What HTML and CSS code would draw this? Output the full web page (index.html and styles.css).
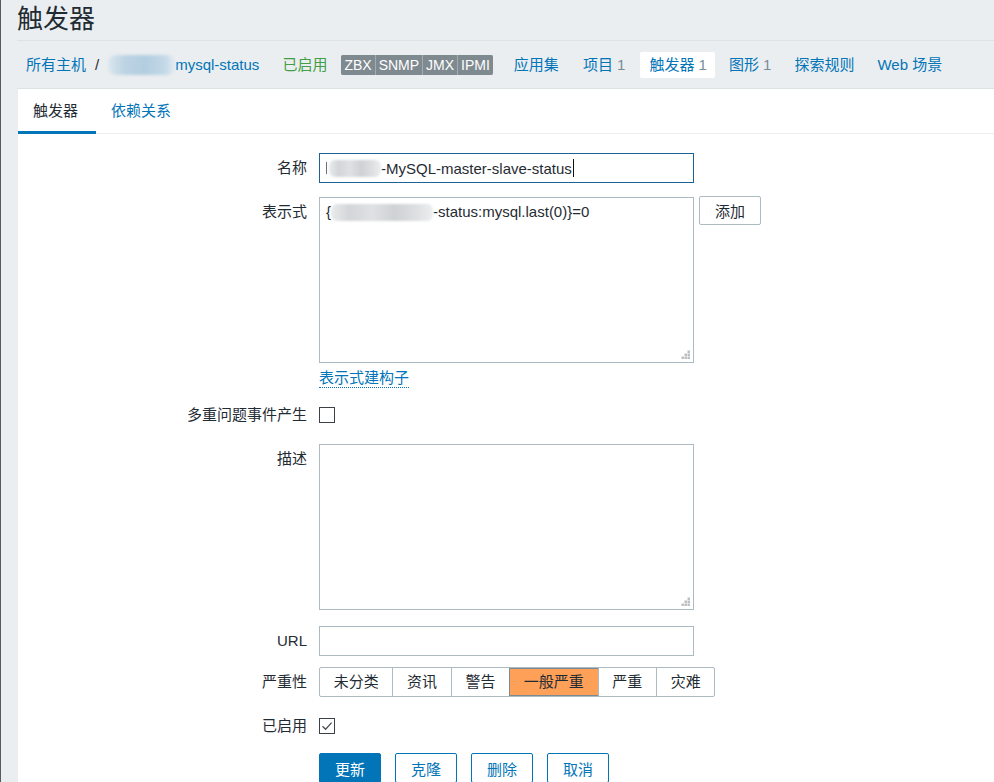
FILE: index.html
```html
<!DOCTYPE html>
<html lang="zh-CN">
<head>
<meta charset="utf-8">
<title>触发器</title>
<link rel="stylesheet" href="styles.css">
</head>
<body>
<div class="page">
  <header class="header">
    <h1 class="title">触发器</h1>
  </header>
  <nav class="nav">
    <a class="crumb">所有主机</a>
    <span class="sep">/</span>
    <a class="crumb host"><span class="blur blur-blue"></span>mysql-status</a>
    <span class="status-on">已启用</span>
    <span class="tags"><span class="tag">ZBX</span><span class="tag">SNMP</span><span class="tag">JMX</span><span class="tag">IPMI</span></span>
    <a class="nav-link first">应用集</a>
    <a class="nav-link">项目 <span class="count">1</span></a>
    <a class="nav-link active">触发器 <span class="count">1</span></a>
    <a class="nav-link">图形 <span class="count">1</span></a>
    <a class="nav-link">探索规则</a>
    <a class="nav-link">Web 场景</a>
  </nav>
  <main class="panel">
    <div class="tabs">
      <span class="tab active">触发器</span>
      <span class="tab">依赖关系</span>
    </div>
    <form class="form">
      <div class="row row-name">
        <label class="label">名称</label>
        <div class="field">
          <div class="input focused"><span class="frag"></span><span class="blur blur-grey short"></span>-MySQL-master-slave-status<span class="caret"></span></div>
        </div>
      </div>
      <div class="row row-expr">
        <label class="label">表示式</label>
        <div class="field">
          <div class="field-line">
            <div class="textarea"><span class="ta-text">{<span class="blur blur-grey long"></span>-status:mysql.last(0)}=0</span>
              <svg class="grip" width="10" height="10" viewBox="0 0 10 10"><rect x="7.5" y="1.5" width="2.5" height="2.5"/><rect x="4.5" y="4.5" width="2.5" height="2.5"/><rect x="7.5" y="4.5" width="2.5" height="2.5"/><rect x="1.5" y="7.5" width="2.5" height="2.5"/><rect x="4.5" y="7.5" width="2.5" height="2.5"/><rect x="7.5" y="7.5" width="2.5" height="2.5"/></svg>
            </div>
            <button type="button" class="btn-alt">添加</button>
          </div>
          <a class="link-dotted">表示式建构子</a>
        </div>
      </div>
      <div class="row row-multi">
        <label class="label">多重问题事件产生</label>
        <div class="field center"><span class="checkbox"></span></div>
      </div>
      <div class="row row-desc">
        <label class="label">描述</label>
        <div class="field">
          <div class="textarea">
            <svg class="grip" width="10" height="10" viewBox="0 0 10 10"><rect x="7.5" y="1.5" width="2.5" height="2.5"/><rect x="4.5" y="4.5" width="2.5" height="2.5"/><rect x="7.5" y="4.5" width="2.5" height="2.5"/><rect x="1.5" y="7.5" width="2.5" height="2.5"/><rect x="4.5" y="7.5" width="2.5" height="2.5"/><rect x="7.5" y="7.5" width="2.5" height="2.5"/></svg>
          </div>
        </div>
      </div>
      <div class="row row-url">
        <label class="label">URL</label>
        <div class="field"><div class="input"></div></div>
      </div>
      <div class="row row-sev">
        <label class="label">严重性</label>
        <div class="field">
          <div class="severity">
            <span class="seg">未分类</span><span class="seg">资讯</span><span class="seg">警告</span><span class="seg selected">一般严重</span><span class="seg">严重</span><span class="seg">灾难</span>
          </div>
        </div>
      </div>
      <div class="row row-enabled">
        <label class="label">已启用</label>
        <div class="field center"><span class="checkbox checked"><svg width="14" height="14" viewBox="0 0 14 14"><path d="M2.5 7.2 L5.6 10.2 L11.6 3.6" fill="none" stroke="#4a5258" stroke-width="1.3"/></svg></span></div>
      </div>
      <div class="row row-buttons">
        <span class="label"></span>
        <div class="field buttons">
          <button type="button" class="btn-main">更新</button>
          <button type="button" class="btn-outline">克隆</button>
          <button type="button" class="btn-outline">删除</button>
          <button type="button" class="btn-outline">取消</button>
        </div>
      </div>
    </form>
  </main>
</div>
</body>
</html>
```

FILE: styles.css
```css
* { box-sizing: border-box; }
html, body { margin: 0; padding: 0; height: 100%; }
body {
  background: #ebeef0;
  color: #1f2c33;
  font-family: "Liberation Sans", "Noto Sans CJK SC", sans-serif;
  font-size: 15px;
  overflow: hidden;
}
.page {
  min-height: 100%;
  border-left: 1px solid #555a5e;
  padding-left: 16px;
}
.header {
  height: 41px;
  border-bottom: 1px solid #dde2e5;
}
.title {
  margin: 0;
  font-weight: normal;
  font-size: 26px;
  line-height: 38px;
  color: #1f2c33;
}
.nav {
  display: flex;
  align-items: center;
  height: 48px;
  padding-top: 11px;
  padding-bottom: 10px;
  border-bottom: 1px solid #dde2e5;
}
.nav a { color: #0275b8; text-decoration: none; }
.crumb { margin-left: 9px; line-height: 26px; white-space: nowrap; }
.sep { margin-left: 9px; color: #1f2c33; line-height: 26px; }
.host { display: flex; align-items: center; }
.blur { display: inline-block; vertical-align: middle; }
.blur-blue {
  width: 67px;
  height: 20px;
  border-radius: 8px;
  background: linear-gradient(90deg, #dbe6ee 0%, #bcd3e3 25%, #b3cde0 55%, #c3d8e7 85%, #e3ecf2 100%);
  filter: blur(1.5px);
}
.status-on { margin-left: 23px; color: #429e47; line-height: 26px; }
.tags {
  display: flex;
  gap: 1px;
  margin-left: 14px;
  background: #a3abb0;
  border-radius: 2px;
  overflow: hidden;
}
.tag {
  background: #7f8a90;
  color: #fff;
  font-size: 14px;
  line-height: 20px;
  padding: 0 3px;
}
.nav-link {
  padding: 0 9px;
  line-height: 26px;
  margin-left: 6px;
  white-space: nowrap;
}
.nav-link.first { margin-left: 12px; }
.nav-link.active { background: #fff; border-radius: 2px; padding: 0 8px 0 9px; }
.nav-link.active ~ .nav-link { margin-left: 5px; }
.count { color: #768d99; }

.panel {
  margin-left: 1px;
  background: #fff;
  min-height: 700px;
}
.tabs {
  display: flex;
  border-bottom: 1px solid #ebeef0;
}
.tab {
  padding: 0 16px 0 15px;
  height: 45px;
  line-height: 43px;
  border-bottom: 3px solid transparent;
  margin-bottom: -1px;
  color: #0275b8;
}
.tab.active { color: #1f2c33; border-bottom-color: #0275b8; padding-right: 18px; }

.form { padding-top: 19px; }
.row {
  display: grid;
  grid-template-columns: 289px 1fr;
  column-gap: 12px;
}
.label {
  text-align: right;
  line-height: 30px;
  white-space: nowrap;
}
.field.center { display: flex; align-items: center; height: 30px; }
.row-expr { margin-top: 14px; }
.row-multi { margin-top: 12px; }
.row-desc { margin-top: 14px; }
.row-url { margin-top: 16px; }
.row-sev { margin-top: 11px; }
.row-enabled { margin-top: 14px; }
.row-buttons { margin-top: 12px; }

.input {
  width: 375px;
  height: 30px;
  border: 1px solid #acbbc2;
  padding: 0 6px;
  display: flex;
  align-items: center;
  white-space: nowrap;
  background: #fff;
}
.input.focused { border-color: #1d6294; }
.frag { display: inline-block; width: 1px; height: 12px; background: #6b6f72; margin-right: 2px; }
.blur-grey {
  height: 17px;
  border-radius: 6px;
  background: linear-gradient(90deg, #e9ebec 0%, #d3d6d8 18%, #dfe1e3 40%, #cfd2d4 62%, #dcdee0 82%, #eceeef 100%);
  filter: blur(1.3px);
}
.blur-grey.short { width: 52px; }
.blur-grey.long { width: 102px; }
.caret { display: inline-block; width: 1px; height: 18px; background: #111; margin-left: 1px; }

.field-line { display: flex; align-items: flex-start; gap: 5px; }
.textarea {
  position: relative;
  width: 375px;
  height: 166px;
  border: 1px solid #acbbc2;
  background: #fff;
  padding: 5px 6px;
}
.ta-text { display: flex; align-items: center; line-height: 18px; white-space: nowrap; }
.grip { position: absolute; right: 3px; bottom: 3px; fill: #bdbfc1; }
.btn-alt {
  font: inherit;
  color: #1f2c33;
  background: #fff;
  border: 1px solid #acbbc2;
  border-radius: 2px;
  height: 29px;
  width: 62px;
  padding: 0;
  margin-top: -1px;
}
.link-dotted {
  display: inline-block;
  margin-top: 6px;
  line-height: 18px;
  color: #0275b8;
  border-bottom: 1px dotted #0275b8;
}
.checkbox {
  display: inline-flex;
  align-items: center;
  justify-content: center;
  width: 16px;
  height: 16px;
  border: 1px solid #3b4145;
  background: #fff;
}
.severity {
  display: inline-flex;
  height: 30px;
  border: 1px solid #acbbc2;
  border-radius: 2px;
}
.seg {
  padding: 0 13.7px;
  line-height: 28px;
  border-left: 1px solid #acbbc2;
  white-space: nowrap;
}
.seg:first-child { border-left: 0; }
.seg.selected {
  background: #ffa059;
  border-left-color: #7b8b94;
  box-shadow: 1px 0 0 #7b8b94, inset 0 1px 0 #7b8b94, inset 0 -1px 0 #7b8b94;
}
.buttons { display: flex; gap: 14px; }
.btn-main, .btn-outline {
  font: inherit;
  height: 30px;
  padding: 0 15px;
  border-radius: 2px;
  border: 1px solid #0275b8;
}
.btn-main { background: #0275b8; color: #fff; }
.btn-outline { background: #fff; color: #0275b8; }
```
